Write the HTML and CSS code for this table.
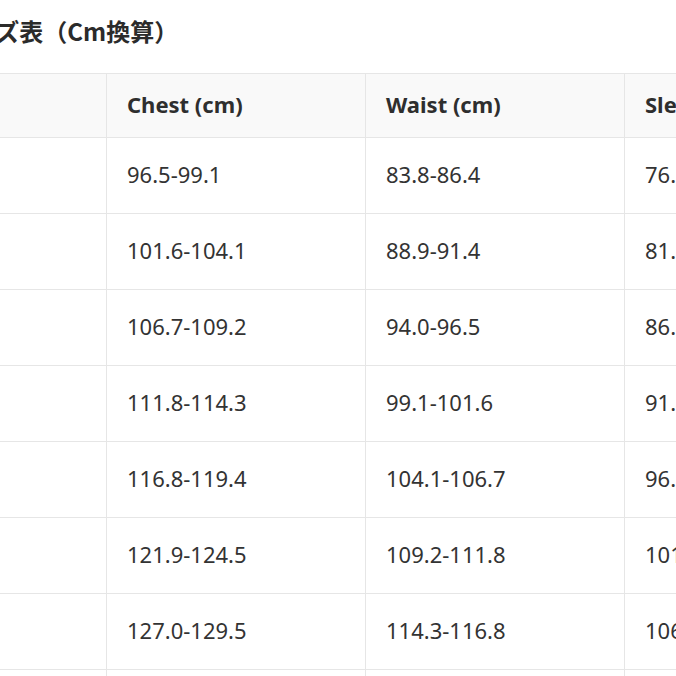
FILE: index.html
```html
<!DOCTYPE html>
<html lang="ja">
<head>
<meta charset="utf-8">
<link rel="stylesheet" href="styles.css">
</head>
<body>
<div class="page">
  <h2 class="title">サイズ表（Cm換算）</h2>
  <table class="size-table">
    <colgroup>
      <col class="c-size"><col class="c-val"><col class="c-val"><col class="c-val">
    </colgroup>
    <thead>
      <tr><th>Size</th><th>Chest (cm)</th><th>Waist (cm)</th><th>Sleeve (cm)</th></tr>
    </thead>
    <tbody>
      <tr><td>S</td><td>96.5-99.1</td><td>83.8-86.4</td><td>76.2-78.7</td></tr>
      <tr><td>M</td><td>101.6-104.1</td><td>88.9-91.4</td><td>81.3-83.8</td></tr>
      <tr><td>L</td><td>106.7-109.2</td><td>94.0-96.5</td><td>86.4-88.9</td></tr>
      <tr><td>XL</td><td>111.8-114.3</td><td>99.1-101.6</td><td>91.4-94.0</td></tr>
      <tr><td>2XL</td><td>116.8-119.4</td><td>104.1-106.7</td><td>96.5-99.1</td></tr>
      <tr><td>3XL</td><td>121.9-124.5</td><td>109.2-111.8</td><td>101.6-104.1</td></tr>
      <tr><td>4XL</td><td>127.0-129.5</td><td>114.3-116.8</td><td>106.7-109.2</td></tr>
      <tr><td>5XL</td><td>132.1-134.6</td><td>119.4-121.9</td><td>111.8-114.3</td></tr>
    </tbody>
  </table>
</div>
</body>
</html>
```
FILE: styles.css
```css
html, body {
  margin: 0;
  padding: 0;
  background: #ffffff;
  overflow: hidden;
}
.page {
  width: 676px;
  height: 676px;
  overflow: hidden;
  font-family: "Noto Sans", "Noto Sans CJK JP", sans-serif;
  color: #333333;
}
.title {
  margin: 0 0 0 -52px;
  padding-top: 12px;
  height: 73px;
  box-sizing: border-box;
  font-family: "Noto Sans CJK JP", sans-serif;
  font-size: 24px;
  font-weight: 700;
  line-height: 38px;
  color: #2b2b2b;
  white-space: nowrap;
}
.size-table {
  border-collapse: collapse;
  table-layout: fixed;
  width: 884px;
  margin-left: -1px;
}
.c-size { width: 107px; }
.c-val { width: 259px; }
.size-table th,
.size-table td {
  border: 1px solid #e6e6e6;
  text-align: left;
  vertical-align: middle;
  padding: 0 0 3px 20px;
  white-space: nowrap;
  font-size: 22px;
}
.size-table th:first-child,
.size-table td:first-child {
  color: transparent;
}
.size-table thead th {
  height: 60px;
  background: #f9f9f9;
  font-weight: 700;
  color: #2e2e2e;
}
.size-table tbody td {
  height: 72px;
  font-weight: 400;
  color: #333333;
}
```
